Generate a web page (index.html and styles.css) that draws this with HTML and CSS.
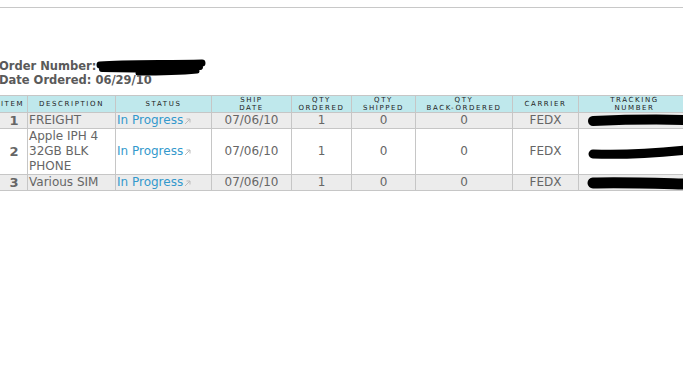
FILE: index.html
```html
<!DOCTYPE html>
<html>
<head>
<meta charset="utf-8">
<link rel="stylesheet" href="styles.css">
</head>
<body>
<div class="topline"></div>
<div class="info">
  <div class="info-line">Order Number:<svg class="redact-order" width="112" height="20" viewBox="0 0 112 20"><path d="M4 6 C30 4 70 5 106 4" stroke="#000" stroke-width="7" stroke-linecap="round" fill="none"/><path d="M6 10 C40 11 80 10 104 8" stroke="#000" stroke-width="6" stroke-linecap="round" fill="none"/><path d="M42 14 C70 14 90 13 101 12" stroke="#000" stroke-width="5" stroke-linecap="round" fill="none"/></svg></div>
  <div class="info-line">Date Ordered: 06/29/10</div>
</div>
<table class="orders">
  <colgroup>
    <col class="w-item"><col class="w-desc"><col class="w-status"><col class="w-ship"><col class="w-qo"><col class="w-qs"><col class="w-qb"><col class="w-carrier"><col class="w-track">
  </colgroup>
  <thead>
    <tr>
      <th>ITEM</th>
      <th>DESCRIPTION</th>
      <th>STATUS</th>
      <th>SHIP<br>DATE</th>
      <th>QTY<br>ORDERED</th>
      <th>QTY<br>SHIPPED</th>
      <th>QTY<br>BACK-ORDERED</th>
      <th>CARRIER</th>
      <th>TRACKING<br>NUMBER</th>
    </tr>
  </thead>
  <tbody>
    <tr class="shade">
      <td class="num">1</td>
      <td class="desc">FREIGHT</td>
      <td class="status"><a href="#">In Progress</a><svg class="ext" width="7" height="7" viewBox="0 0 7 7"><path d="M1 6 L6 1 M2.5 1 H6 V4.5" stroke="#bbb" stroke-width="1" fill="none"/></svg></td>
      <td class="mid">07/06/10</td>
      <td class="mid">1</td>
      <td class="mid">0</td>
      <td class="mid">0</td>
      <td class="mid">FEDX</td>
      <td class="track"><svg width="104" height="14" viewBox="0 0 104 14"><path d="M6 7 C30 6 60 5 100 6" stroke="#000" stroke-width="10" stroke-linecap="round" fill="none"/></svg></td>
    </tr>
    <tr>
      <td class="num">2</td>
      <td class="desc">Apple IPH 4<br>32GB BLK<br>PHONE</td>
      <td class="status"><a href="#">In Progress</a><svg class="ext" width="7" height="7" viewBox="0 0 7 7"><path d="M1 6 L6 1 M2.5 1 H6 V4.5" stroke="#bbb" stroke-width="1" fill="none"/></svg></td>
      <td class="mid">07/06/10</td>
      <td class="mid">1</td>
      <td class="mid">0</td>
      <td class="mid">0</td>
      <td class="mid">FEDX</td>
      <td class="track"><svg width="104" height="18" viewBox="0 0 104 18"><path d="M6 11 C30 12 60 11 100 7" stroke="#000" stroke-width="9" stroke-linecap="round" fill="none"/></svg></td>
    </tr>
    <tr class="shade">
      <td class="num">3</td>
      <td class="desc">Various SIM</td>
      <td class="status"><a href="#">In Progress</a><svg class="ext" width="7" height="7" viewBox="0 0 7 7"><path d="M1 6 L6 1 M2.5 1 H6 V4.5" stroke="#bbb" stroke-width="1" fill="none"/></svg></td>
      <td class="mid">07/06/10</td>
      <td class="mid">1</td>
      <td class="mid">0</td>
      <td class="mid">0</td>
      <td class="mid">FEDX</td>
      <td class="track"><svg width="104" height="14" viewBox="0 0 104 14"><path d="M6 7 C30 6 60 7 100 8" stroke="#000" stroke-width="11" stroke-linecap="round" fill="none"/></svg></td>
    </tr>
  </tbody>
</table>
</body>
</html>
```
FILE: styles.css
```css
html, body {
  margin: 0;
  padding: 0;
  background: #fff;
  overflow: hidden;
}
body {
  font-family: "DejaVu Sans", Verdana, sans-serif;
  color: #666;
}
.topline {
  margin-top: 7px;
  height: 1px;
  background: #c8c8c8;
}
.info {
  padding-top: 51px;
  margin-left: -1px;
  font-weight: bold;
  font-size: 11.5px;
  line-height: 14px;
  color: #5a5a5a;
}
.info-line {
  height: 14px;
  white-space: nowrap;
}
.redact-order {
  vertical-align: top;
  margin-top: 0;
  margin-left: 0;
}
.orders {
  margin-top: 8px;
  margin-left: -3px;
  border-collapse: collapse;
  table-layout: fixed;
  width: 693px;
  font-size: 12px;
  line-height: 15px;
}
.w-item { width: 30px; }
.w-desc { width: 88px; }
.w-status { width: 96px; }
.w-ship { width: 80px; }
.w-qo { width: 60px; }
.w-qs { width: 64px; }
.w-qb { width: 97px; }
.w-carrier { width: 66px; }
.w-track { width: 112px; }
.orders th {
  background: #bfe8ec;
  font-family: "DejaVu Sans", sans-serif;
  font-weight: normal;
  font-size: 7px;
  letter-spacing: 1.6px;
  line-height: 8px;
  color: #222;
  height: 16px;
  padding: 0;
  border: 1px solid #c6c6c6;
  text-align: center;
  vertical-align: middle;
  white-space: nowrap;
  overflow: hidden;
}
.orders td {
  border: 1px solid #c6c6c6;
  padding: 0;
  vertical-align: middle;
  white-space: nowrap;
  overflow: hidden;
}
.orders tr.shade td {
  background: #ececec;
}
.orders td.num {
  text-align: center;
  font-weight: bold;
  font-size: 13px;
  padding-left: 3px;
  color: #666;
}
.orders td.desc {
  padding-left: 1px;
}
.orders td.status {
  padding-left: 1px;
}
.status a {
  color: #3399cc;
  text-decoration: none;
}
.ext {
  margin-left: 1px;
  vertical-align: -1px;
}
.orders td.mid {
  text-align: center;
}
.orders td.track {
  padding-left: 8px;
  line-height: 0;
}
```
